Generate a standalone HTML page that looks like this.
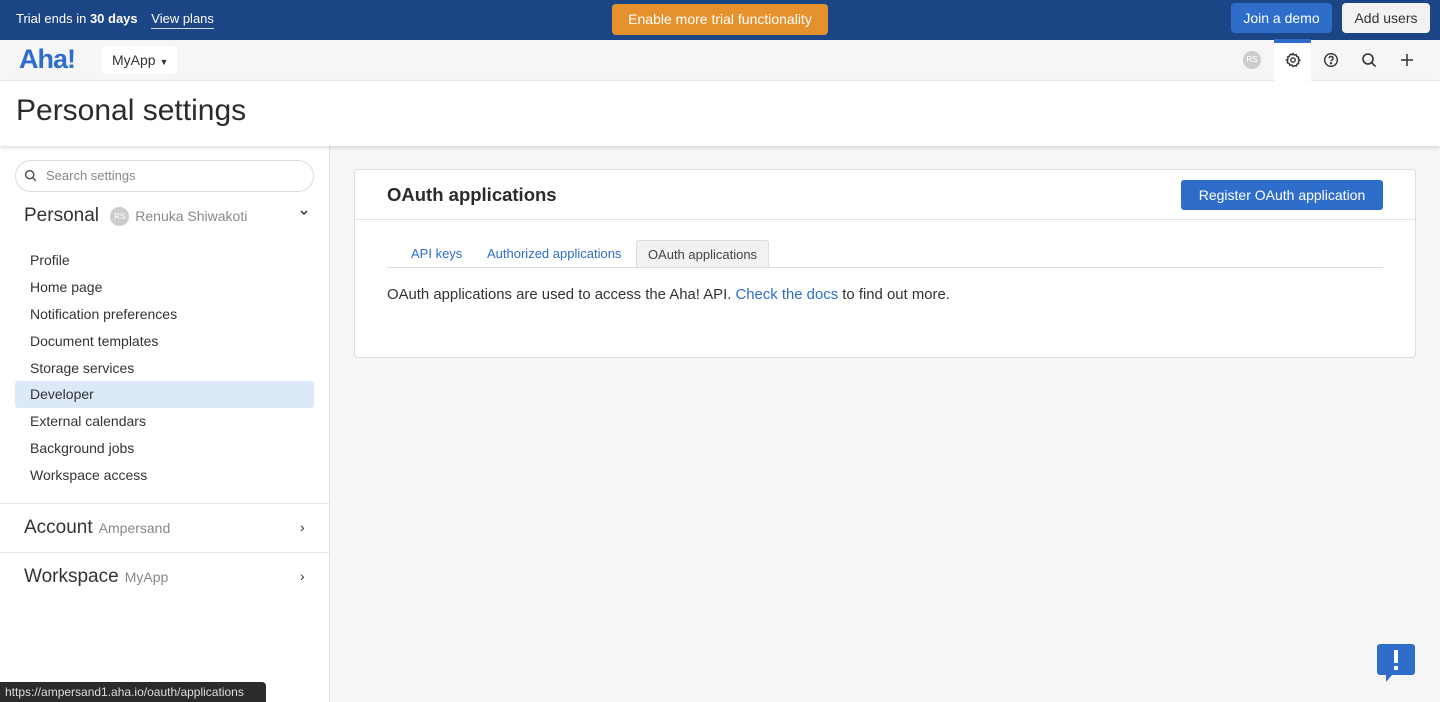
<!DOCTYPE html>
<html><head><meta charset="utf-8"><style>
*{box-sizing:border-box;margin:0;padding:0}
body{width:1440px;height:702px;overflow:hidden;font-family:"Liberation Sans",sans-serif;background:#f6f6f6;color:#333;position:relative}
.top{height:40px;background:#1c4585;position:relative;color:#fff;font-size:13px}
.top .l{position:absolute;left:16px;top:11px}
.top .l u{text-decoration:none;border-bottom:1px solid #cfd8e6;padding-bottom:2px;margin-left:10px}
.btn-or{position:absolute;left:612px;top:4px;width:216px;height:31px;background:#e5922e;border-radius:4px;color:#fff;font-size:14px;text-align:center;line-height:31px}
.jd{position:absolute;left:1231px;top:3px;width:101px;height:30px;background:#2f6dcb;border-radius:4px;text-align:center;line-height:30px;font-size:14px}
.au{position:absolute;left:1342px;top:3px;width:88px;height:30px;background:#f2f2f2;border-radius:4px;text-align:center;line-height:30px;font-size:14px;color:#333}
.nav{height:41px;background:#f6f6f6;position:relative;border-bottom:1px solid #eaeaea}
.logo{position:absolute;left:19px;top:4px;font-size:27px;font-weight:bold;color:#2f6dcb;letter-spacing:-1px}
.app{position:absolute;left:102px;top:6px;width:75px;height:28px;background:#fff;border-radius:4px;font-size:14px;line-height:28px;padding-left:10px}
.ph{height:65px;background:#fff;box-shadow:0 2px 4px rgba(0,0,0,.12);position:relative;z-index:2}
.ph h1{font-weight:normal;font-size:30px;position:absolute;left:16px;top:13px;color:#2b2b2b}
.side{position:absolute;left:0;top:146px;width:330px;height:556px;background:#fff;border-right:1px solid #e4e4e4}
.search{position:absolute;left:15px;top:14px;width:299px;height:32px;border:1px solid #ddd;border-radius:16px;font-size:13px;color:#888;line-height:30px;padding-left:30px}
.sec{position:absolute;left:24px;font-size:19px;color:#333}
.sec small{font-size:14px;color:#888;margin-left:6px}
.item{position:absolute;left:15px;width:299px;height:27px;line-height:27px;padding-left:15px;font-size:14px;color:#333}
.item.sel{background:#dce9f9;border-radius:3px}
.hr{position:absolute;left:0;width:329px;border-top:1px solid #e4e4e4}
.card{position:absolute;left:354px;top:169px;width:1062px;height:189px;background:#fff;border:1px solid #ddd;border-radius:4px}
.card h2{position:absolute;left:32px;top:14px;font-size:18.5px;color:#2b2b2b}
.reg{position:absolute;left:826px;top:10px;width:202px;height:30px;background:#2f6dcb;border-radius:3px;color:#fff;font-size:14px;text-align:center;line-height:30px}
.cl{position:absolute;left:0;top:49px;width:1060px;border-top:1px solid #e4e4e4}
.tabs{position:absolute;left:32px;top:97px;width:996px;border-top:1px solid #ddd}
.tab{position:absolute;top:76px;font-size:13px;color:#2f6dcb}
.tabon{position:absolute;left:281px;top:70px;width:133px;height:28px;background:#f2f2f2;border:1px solid #ddd;border-bottom:none;border-radius:3px 3px 0 0;font-size:13px;color:#444;text-align:center;line-height:27px}
.p{position:absolute;left:32px;top:117px;font-size:14.9px;color:#333}
.p a{color:#2f6dcb;text-decoration:none}
.status{position:absolute;left:0;top:682px;width:266px;height:20px;background:#2b2b2b;color:#ddd;font-size:12px;line-height:20px;padding-left:5px;border-radius:0 4px 0 0}
</style></head><body>
<div class="top"><div class="l">Trial ends in <b>30 days</b> <u>View plans</u></div>
<div class="btn-or">Enable more trial functionality</div>
<div class="jd">Join a demo</div><div class="au">Add users</div></div>
<div class="nav"><div class="logo">Aha!</div><div class="app">MyApp <span style="font-size:9px">▼</span></div>
<div style="position:absolute;left:1243px;top:11px;width:18px;height:18px;border-radius:50%;background:#ccc;color:#fff;font-size:8px;text-align:center;line-height:18px">RS</div>
<div style="position:absolute;left:1274px;top:-1px;width:37px;height:42px;background:#fff;border-top:4px solid #2f6dcb"></div>
<svg style="position:absolute;left:1285px;top:12px" width="16" height="16" viewBox="0 0 16 16" fill="none" stroke="#333" stroke-width="1.4"><circle cx="8" cy="8" r="2.2"/><path d="M8 1.5l1.2 1.6 2-.4.6 1.9 1.9.6-.4 2 1.6 1.2-1.6 1.2.4 2-1.9.6-.6 1.9-2-.4L8 14.5l-1.2-1.6-2 .4-.6-1.9-1.9-.6.4-2L1.5 8l1.6-1.2-.4-2 1.9-.6.6-1.9 2 .4z"/></svg>
<svg style="position:absolute;left:1323px;top:12px" width="16" height="16" viewBox="0 0 16 16" fill="none" stroke="#333" stroke-width="1.4"><circle cx="8" cy="8" r="6.3"/><path d="M6.2 6.3a1.9 1.9 0 1 1 2.5 1.8c-.5.2-.7.6-.7 1.2"/><circle cx="8" cy="11.3" r=".5" fill="#333"/></svg>
<svg style="position:absolute;left:1361px;top:12px" width="16" height="16" viewBox="0 0 16 16" fill="none" stroke="#333" stroke-width="1.6"><circle cx="7" cy="7" r="5"/><path d="M10.6 10.6l4 4"/></svg>
<svg style="position:absolute;left:1399px;top:12px" width="16" height="16" viewBox="0 0 16 16" stroke="#333" stroke-width="1.5"><path d="M8 2v12M2 8h12"/></svg>
</div>
<div class="ph"><h1>Personal settings</h1></div>
<div class="side">
<div class="search">Search settings</div>
<svg style="position:absolute;left:24px;top:23px" width="13" height="13" viewBox="0 0 16 16" fill="none" stroke="#555" stroke-width="1.8"><circle cx="7" cy="7" r="5"/><path d="M10.6 10.6l4 4"/></svg>
<div class="sec" style="top:59px">Personal <span style="display:inline-block;width:19px;height:19px;border-radius:50%;background:#ccc;color:#fff;font-size:8px;text-align:center;line-height:19px;vertical-align:2px;margin-left:6px">RS</span><small style="margin-left:6px">Renuka Shiwakoti</small></div>
<svg style="position:absolute;left:299px;top:63px" width="10" height="8" viewBox="0 0 10 8" fill="none" stroke="#333" stroke-width="1.5"><path d="M2 2l3 3 3-3"/></svg>
<div class="item" style="top:101px">Profile</div>
<div class="item" style="top:128px">Home page</div>
<div class="item" style="top:155px">Notification preferences</div>
<div class="item" style="top:182px">Document templates</div>
<div class="item" style="top:209px">Storage services</div>
<div class="item sel" style="top:235px">Developer</div>
<div class="item" style="top:262px">External calendars</div>
<div class="item" style="top:289px">Background jobs</div>
<div class="item" style="top:316px">Workspace access</div>
<div class="hr" style="top:357px"></div>
<div class="sec" style="top:371px">Account<small>Ampersand</small></div>
<div style="position:absolute;left:300px;top:373px;font-size:14px">›</div>
<div class="hr" style="top:406px"></div>
<div class="sec" style="top:420px">Workspace<small>MyApp</small></div>
<div style="position:absolute;left:300px;top:422px;font-size:14px">›</div>
</div>
<div class="card"><h2>OAuth applications</h2><div class="reg">Register OAuth application</div><div class="cl"></div>
<div class="tab" style="left:56px">API keys</div><div class="tab" style="left:132px">Authorized applications</div>
<div class="tabon">OAuth applications</div><div class="tabs"></div>
<div class="p">OAuth applications are used to access the Aha! API. <a>Check the docs</a> to find out more.</div></div>
<svg style="position:absolute;left:1377px;top:644px" width="38" height="40" viewBox="0 0 38 40"><path d="M3 0h32a3 3 0 0 1 3 3v25a3 3 0 0 1-3 3H15l-6 7v-7H3a3 3 0 0 1-3-3V3a3 3 0 0 1 3-3z" fill="#2f6dcb"/><rect x="17" y="6" width="4" height="13" fill="#fff"/><rect x="17" y="22" width="4" height="4" fill="#fff"/></svg>
<div class="status">https://ampersand1.aha.io/oauth/applications</div>
</body></html>
